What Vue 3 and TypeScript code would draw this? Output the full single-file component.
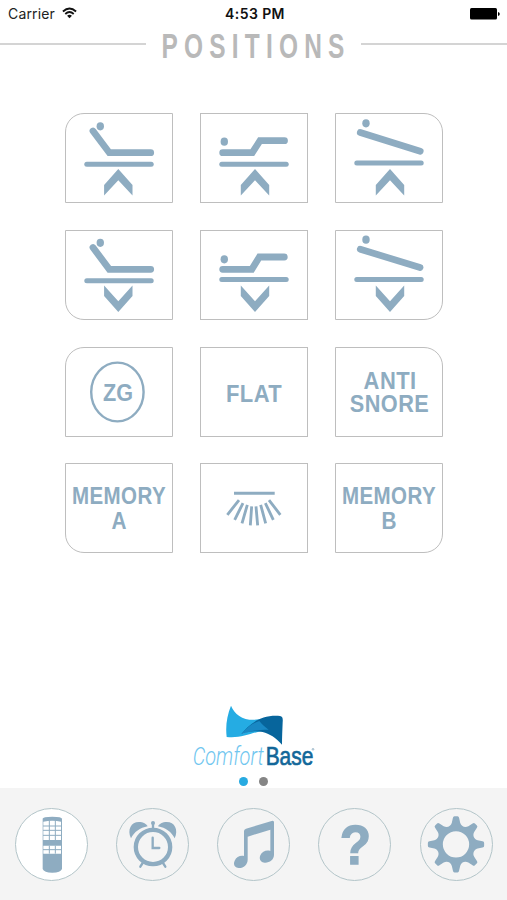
<script setup lang="ts">
import { ref } from 'vue'

interface Label { t: string; x: number; y: number; w: number; s: number; ls: number }
interface Key {
  id: string
  corner?: 'tl' | 'tr' | 'bl' | 'br'
  head?: [number, number]
  body?: string
  base?: number
  chevron?: string
  labels?: Label[]
}

const up = (c: number) =>
  `M${c} 56L${c + 14.2} 72V82.6L${c} 67.3L${c - 14.2} 82.6V72Z`
const down = (c: number) =>
  `M${c} 82L${c + 14.2} 66V55.6L${c} 71.2L${c - 14.2} 55.6V66Z`

const keys: Key[] = [
  { id: 'head-up', corner: 'tl', head: [35.3, 13.3], body: 'M28 18L44.3 39.7H85.7', base: 51.3, chevron: up(53.3) },
  { id: 'foot-up', head: [24.3, 28.7], body: 'M22.7 39.7H52.3L60 27.7H84.5', base: 51.2, chevron: up(55) },
  { id: 'tilt-up', corner: 'tr', head: [31, 10.3], body: 'M25.3 19.4L85.2 38.3', base: 50, chevron: up(55) },
  { id: 'head-down', corner: 'bl', head: [35.3, 12.8], body: 'M28 17.5L44.3 39.3H85.7', base: 50.7, chevron: down(53.3) },
  { id: 'foot-down', head: [24.3, 29.3], body: 'M22.7 39.3H51.8L59.4 27H84.3', base: 49.4, chevron: down(55) },
  { id: 'tilt-down', corner: 'br', head: [31, 9.7], body: 'M25.3 19.2L85 37.6', base: 49.4, chevron: down(55) },
  { id: 'zg', corner: 'tl', labels: [{ t: 'ZG', x: 38, y: 53.6, w: 30, s: 24, ls: 0 }] },
  { id: 'flat', labels: [{ t: 'FLAT', x: 25.9, y: 54.8, w: 56.3, s: 23.5, ls: 0.5 }] },
  {
    id: 'anti-snore', corner: 'tr', labels: [
      { t: 'ANTI', x: 28.6, y: 42, w: 53, s: 23.5, ls: 0.5 },
      { t: 'SNORE', x: 14.8, y: 64.7, w: 79.4, s: 23.5, ls: 0.5 },
    ],
  },
  {
    id: 'memory-a', corner: 'bl', labels: [
      { t: 'MEMORY', x: 6.9, y: 41.4, w: 94.2, s: 23, ls: 0.5 },
      { t: 'A', x: 46.6, y: 66.4, w: 15, s: 23, ls: 0 },
    ],
  },
  { id: 'light' },
  {
    id: 'memory-b', corner: 'br', labels: [
      { t: 'MEMORY', x: 6.9, y: 41.4, w: 94.2, s: 23, ls: 0.5 },
      { t: 'B', x: 46.6, y: 66.4, w: 15, s: 23, ls: 0 },
    ],
  },
]

const tabs = [
  { id: 'remote', box: '46 67 216 216' },
  { id: 'alarm', box: '351 67 216 216' },
  { id: 'music', box: '54 67 216 216' },
  { id: 'help', box: '357 67 216 216' },
  { id: 'settings', box: '92 67 216 216' },
]
const active = ref('remote')

function gearPath(): string {
  const p = (r: number, a: number) =>
    `${(200 + r * Math.sin(a)).toFixed(1)} ${(176 - r * Math.cos(a)).toFixed(1)}`
  let d = ''
  for (let i = 0; i < 8; i++) {
    const a = (i * Math.PI) / 4
    d += `${i ? 'L' : 'M'}${p(66, a - 0.19)}L${p(80, a - 0.115)}Q${p(85, a - 0.1)} ${p(84.5, a - 0.05)}`
    d += `L${p(84.5, a + 0.05)}Q${p(85, a + 0.1)} ${p(80, a + 0.115)}L${p(66, a + 0.19)}`
    d += `C${p(56, a + 0.28)} ${p(56, a + Math.PI / 4 - 0.28)} ${p(66, a + Math.PI / 4 - 0.19)}`
  }
  return d + 'ZM160.5 176a39.5 39.5 0 1 0 79 0a39.5 39.5 0 1 0 -79 0Z'
}
const gear = gearPath()
</script>

<template>
  <main class="screen">
    <header class="status">
      <div class="carrier">
        <span>Carrier</span>
        <svg class="wifi" viewBox="0 0 16 12">
          <path d="M1 4.4Q8 -1.8 15 4.4M3.5 7Q8 3 12.5 7" />
          <path class="dot" d="M8 11.6L5.4 8.8Q8 6.9 10.6 8.8Z" />
        </svg>
      </div>
      <span class="time">4:53 PM</span>
      <div class="power">
        <svg class="battery" viewBox="0 0 30 12">
          <rect x="0" y="0" width="27" height="11.5" rx="1.5" />
          <path d="M28 4Q29.8 4.4 29.8 6Q29.8 7.6 28 8Z" />
        </svg>
      </div>
    </header>

    <div class="title">
      <i class="rule"></i>
      <svg class="heading" viewBox="0 0 215 34">
        <text transform="translate(15.4 30.9) scale(.69 1)">POSITIONS</text>
      </svg>
      <i class="rule"></i>
    </div>

    <section class="pad">
      <button v-for="k in keys" :key="k.id" class="key" :class="k.corner" type="button">
        <svg viewBox="0 0 108 90">
          <template v-if="k.head">
            <ellipse :cx="k.head[0]" :cy="k.head[1]" rx="3.7" ry="4.1" />
            <path class="body" :d="k.body" />
            <path class="base" :d="`M21.8 ${k.base}H86.2`" />
            <path :d="k.chevron" />
          </template>
          <ellipse v-if="k.id === 'zg'" class="ring" cx="52.4" cy="45" rx="26.2" ry="29.4" />
          <template v-if="k.id === 'light'">
            <path class="lamp" d="M34 30.3H74.7" />
            <path
              class="rays" transform="translate(-10 -3.2) scale(.3333)"
              d="M147 121L112 165M159 130L134 180M172 135L156 191M185 140L181 197M198 140L203 197M212 135L227 191M226 130L250 180M237 121L271 165"
            />
          </template>
          <text
            v-for="l in k.labels" :key="l.t" :x="l.x" :y="l.y" :font-size="l.s"
            :letter-spacing="l.ls" :textLength="l.w" lengthAdjust="spacingAndGlyphs"
          >{{ l.t }}</text>
        </svg>
      </button>
    </section>

    <footer class="foot">
      <svg class="logo" viewBox="0 0 450 225">
        <path fill="#25ace3" d="M153 32C165 62 195 80 238 73C225 82 203 98 186 116C200 110 230 102 266 104C230 106 190 132 140 126C136 92 141 62 153 32Z" />
        <path fill="#07659c" d="M184 117C205 92 238 58 300 63C308 65 309 70 308 82C307 108 306 128 306 149C288 128 268 116 248 111C226 106 202 109 184 117Z" />
        <path fill="#1988c4" d="M184 117C200 98 217 84 238 78C246 88 256 97 266 104C236 104 212 108 184 117Z" />
        <text class="comfort" x="38" y="209" textLength="213" lengthAdjust="spacingAndGlyphs">Comfort</text>
        <text class="brand" x="257" y="209" textLength="143" lengthAdjust="spacingAndGlyphs">Base</text>
        <circle cx="399" cy="163" r="2.6" fill="none" stroke="#4d7f9f" stroke-width="1.5" />
      </svg>
      <div class="pager"><i class="on"></i><i></i></div>
    </footer>

    <nav class="tabs">
      <button
        v-for="t in tabs" :key="t.id" class="tab" :class="{ active: active === t.id }"
        type="button" @click="active = t.id"
      >
        <svg :viewBox="t.box">
          <template v-if="t.id === 'remote'">
            <path d="M126 99Q126 93 155 93Q184 93 184 99V250Q180 261 155 261Q130 261 126 250Z" />
            <path fill="#fff" d="M128 108Q155 103 181 108V163H128ZM128 180H181V204H128Z" />
            <path class="cells" d="M146 104V163M164 104V163M127 121H183M127 134H183M127 149H183M146 180V204M164 180V204M127 192H183" />
          </template>
          <template v-else-if="t.id === 'alarm'">
            <circle class="dial" cx="459" cy="184" r="51.5" />
            <path class="hands" d="M458 156V187H478" />
            <path d="M393 158C380 130 395 106 421 109C435 111 441 118 443 122C420 126 402 139 393 158Z" />
            <path d="M524 158C537 130 522 106 496 109C482 111 476 118 474 122C497 126 515 139 524 158Z" />
            <circle cx="459" cy="112" r="6" />
            <path class="legs" d="M459 114V134M430 229L421 243M487 229L496 243" />
          </template>
          <template v-else-if="t.id === 'music'">
            <path d="M132 136Q132 131 138 129L215 106Q222 103 222 110V208C222 222 208 232 194 231C182 230 176 221 181 209C186 197 200 192 211 196V132L143 153V222C143 237 130 248 116 247C103 246 99 236 104 225C109 214 121 208 132 211Z" />
          </template>
          <text v-else-if="t.id === 'help'" class="mark" x="419" y="235" textLength="94" lengthAdjust="spacingAndGlyphs">?</text>
          <path v-else fill-rule="evenodd" :d="gear" />
        </svg>
      </button>
    </nav>
  </main>
</template>

<style>
html, body { margin: 0; background: #fff; }
</style>

<style scoped>
.screen {
  box-sizing: border-box;
  width: 507px;
  height: 900px;
  display: flex;
  flex-direction: column;
  background: #fff;
  overflow: hidden;
  font-family: Inter, Roboto, sans-serif;
}
svg { display: block; }
button { margin: 0; padding: 0; appearance: none; font: inherit; }
.status {
  height: 27px;
  flex: none;
  display: grid;
  grid-template-columns: 1fr auto 1fr;
  align-items: center;
  padding: 0 7px 0 8px;
  font-size: 14px;
  color: #222;
}
.carrier { display: flex; align-items: center; gap: 7px; letter-spacing: .15px; }
.wifi { width: 15px; height: 12px; margin-top: -2px; fill: none; stroke: #111; stroke-width: 2; }
.wifi .dot { fill: #111; stroke: none; }
.time { font-weight: 600; color: #111; letter-spacing: .4px; padding-left: 2px; }
.power { display: flex; justify-content: flex-end; }
.battery { width: 30px; height: 12px; fill: #000; }
.title { display: flex; align-items: center; height: 34px; flex: none; }
.rule { flex: 1; height: 2px; background: #d4d4d4; }
.heading { width: 215px; height: 34px; overflow: visible; }
.heading text {
  font: bold 35.5px "Liberation Sans", sans-serif;
  letter-spacing: 9px;
  fill: #b9b9b9;
}
.pad {
  display: grid;
  grid-template-columns: repeat(3, 108px);
  grid-auto-rows: 90px;
  gap: 26.8px 27px;
  margin: 52px 0 0 65px;
}
.key {
  box-sizing: border-box;
  position: relative;
  border: 1px solid #bebebe;
  background: #fff;
  display: block;
}
.key svg { width: 108px; height: 90px; margin: -1px; fill: #8eacc1; overflow: visible; }
.key text { font-family: "Liberation Sans", sans-serif; font-weight: bold; }
.tl { border-top-left-radius: 19px; }
.tr { border-top-right-radius: 19px; }
.bl { border-bottom-left-radius: 19px; }
.br { border-bottom-right-radius: 19px; }
.body, .base, .ring, .lamp, .rays { fill: none; stroke: #8eacc1; }
.body { stroke-width: 6.8; stroke-linecap: round; }
.base { stroke-width: 5; stroke-linecap: round; }
.ring { stroke-width: 2.4; }
.lamp { stroke-width: 3.1; }
.rays { stroke-width: 8.5; }
.foot {
  margin-top: auto;
  height: 93px;
  flex: none;
  display: flex;
  flex-direction: column;
  align-items: center;
}
.logo { width: 150px; height: 75px; margin-left: 3px; }
.comfort { font: italic 300 78px Roboto, sans-serif; fill: #70c6ef; }
.brand { font: 78px "Liberation Sans", sans-serif; fill: #126799; stroke: #126799; stroke-width: 2; }
.pager { display: flex; gap: 11px; margin-top: 6.5px; }
.pager i { width: 9px; height: 9px; border-radius: 50%; background: #858585; }
.pager .on { background: #27aae1; }
.tabs {
  box-sizing: border-box;
  height: 112px;
  flex: none;
  display: flex;
  justify-content: space-between;
  align-items: center;
  padding: 0 14.5px 0 15px;
  background: #f4f4f4;
}
.tab {
  box-sizing: border-box;
  width: 73px;
  height: 73px;
  border: 1px solid #b3c5c9;
  border-radius: 50%;
  background: transparent;
}
.tab.active { background: #fff; }
.tab svg { width: 72px; height: 72px; margin: -.5px; fill: #8eacc1; }
.cells { fill: none; stroke: #8eacc1; stroke-width: 3; }
.dial { fill: none; stroke: #8eacc1; stroke-width: 13; }
.hands { fill: none; stroke: #8eacc1; stroke-width: 7; stroke-linecap: round; }
.legs { fill: none; stroke: #8eacc1; stroke-width: 7; stroke-linecap: round; }
.mark { font: bold 168px "Liberation Sans", sans-serif; stroke: #8eacc1; stroke-width: 4; }
</style>
